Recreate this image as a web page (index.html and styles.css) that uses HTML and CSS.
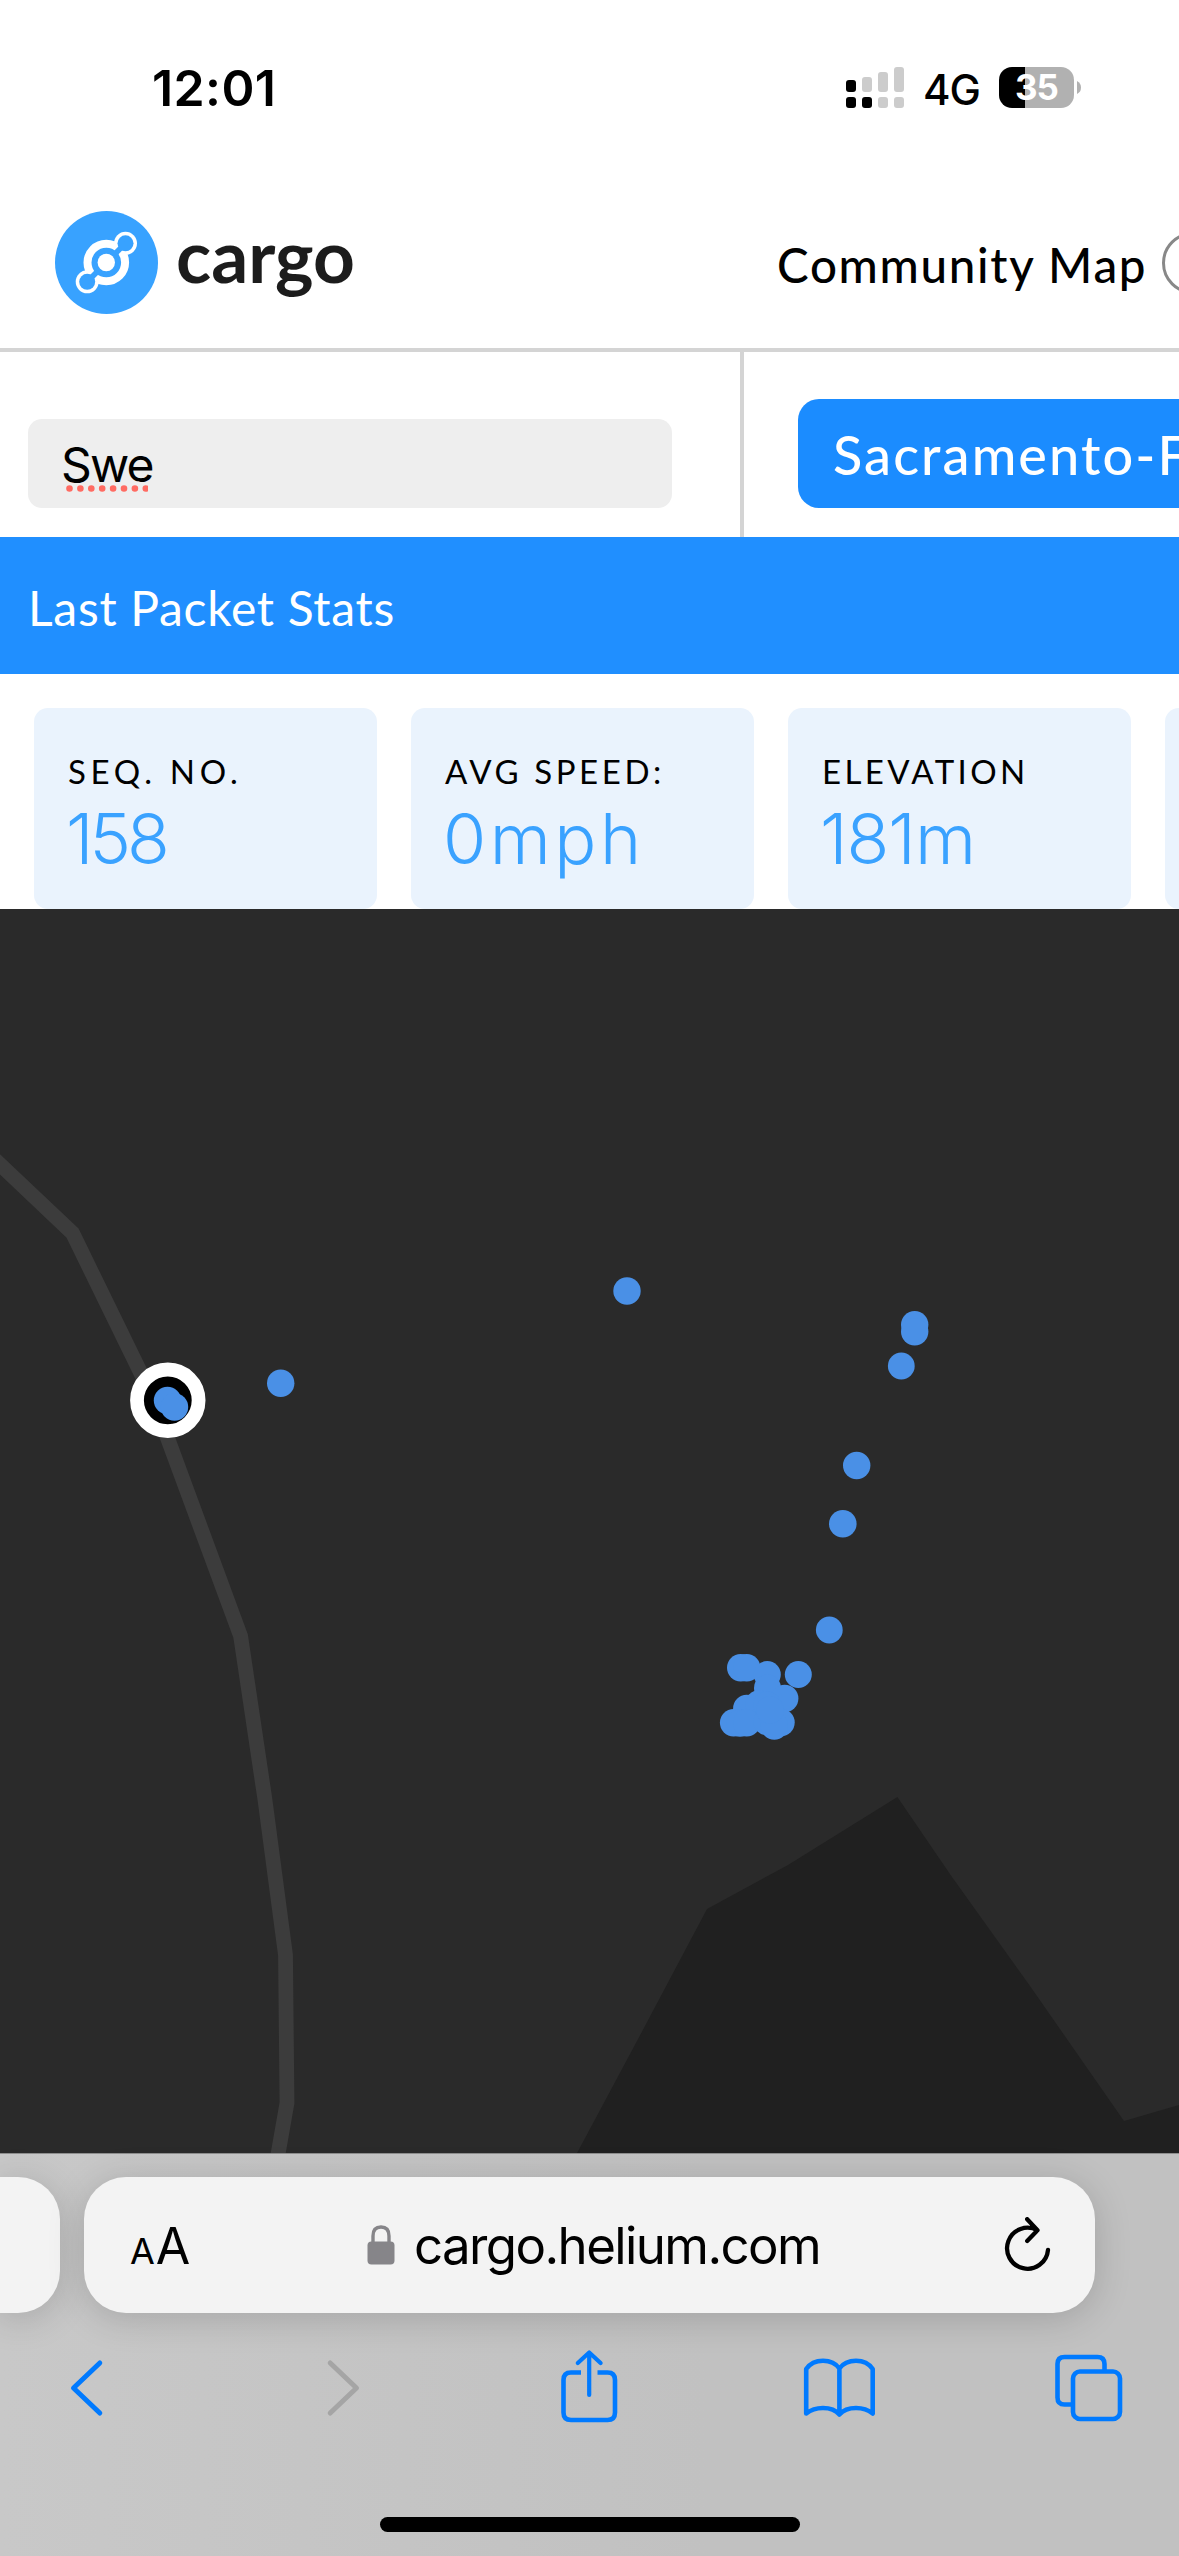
FILE: index.html
```html
<!DOCTYPE html>
<html lang="en">
<head>
<meta charset="utf-8">
<title>Helium Cargo</title>
<link rel="stylesheet" href="styles.css">
</head>
<body>
<div class="screen">
  <div class="status">
    <span class="clock">12:01</span>
    <div class="status-right">
      <svg class="signal" width="58" height="42" viewBox="0 0 58 42">
        <g fill="#ccc">
          <rect x="16" y="10" width="10" height="15" rx="3"/>
          <rect x="32" y="5" width="10" height="20" rx="3"/>
          <rect x="48" y="0" width="10" height="25" rx="3"/>
          <rect x="32" y="30" width="10" height="11" rx="3"/>
          <rect x="48" y="30" width="10" height="11" rx="3"/>
        </g>
        <rect x="0" y="13" width="10" height="12" rx="3"/>
        <rect x="0" y="30" width="10" height="11" rx="3"/>
        <rect x="16" y="30" width="10" height="11" rx="3"/>
      </svg>
      <span class="network">4G</span>
      <div class="battery"><span class="level">35</span></div>
      <svg class="nub" width="4" height="13" viewBox="0 0 4 13"><path d="M0 0Q4 2 4 6.500T0 13Z" fill="#b1b1b1"/></svg>
    </div>
  </div>

  <header class="header">
    <svg class="logo" width="103" height="103" viewBox="0 0 103 103">
      <circle cx="51.500" cy="51.500" r="51.500" fill="#38a2ff"/>
      <circle cx="51.300" cy="51.500" r="18.800" fill="none" stroke="#fff" stroke-width="8"/>
      <circle cx="70.500" cy="32.300" r="11.500" fill="#fff"/>
      <circle cx="32.200" cy="70.800" r="11.500" fill="#fff"/>
      <circle cx="70.500" cy="32.300" r="8" fill="#38a2ff"/>
      <circle cx="32.200" cy="70.800" r="8" fill="#38a2ff"/>
      <path d="M70.500 32.300L32.200 70.800" stroke="#38a2ff" stroke-width="5.500"/>
      <circle cx="51.300" cy="51.500" r="8.700" fill="#fff"/>
    </svg>
    <span class="brand">cargo</span>
    <span class="nav-link">Community Map</span>
    <span class="nav-icon"></span>
  </header>

  <div class="toolbar">
    <div class="search-cell">
      <div class="search"><span class="query">Swe<svg class="spell" width="82" height="7" viewBox="0 0 82 7"><path d="M3.500 3.500H80.200" stroke="#ff6b62" stroke-width="6.600" stroke-linecap="round" stroke-dasharray="0 10.900"/></svg></span></div>
    </div>
    <div class="device-cell"><div class="device">Sacramento-F</div></div>
  </div>

  <div class="section-title"><span>Last Packet Stats</span></div>

  <div class="stats">
    <div class="card seq"><span class="label">SEQ. NO.</span><span class="value">158</span></div>
    <div class="card speed"><span class="label">AVG SPEED:</span><span class="value">0mph</span></div>
    <div class="card elev"><span class="label">ELEVATION</span><span class="value">181m</span></div>
    <div class="card"></div>
  </div>

  <svg class="map" width="1179" height="1244" viewBox="0 909 1179 1244">
    <rect y="909" width="1179" height="1246" fill="#2a2a2a"/>
    <path d="M576 2155L637 2041L707 1909L788 1865L897.400 1797L952 1877L1030 1986L1124 2121L1179 2105V2155Z" fill="#202020"/>
    <path d="M-20 1145.500L72.500 1233L152 1396L240.600 1636L265 1800L285.500 1955L287 2103L277 2160" fill="none" stroke="#3c3c3c" stroke-width="14.800"/>
    <circle cx="167.800" cy="1400.300" r="30.800" fill="#000" stroke="#fff" stroke-width="13.800"/>
    <g fill="#4a90e6">
      <circle cx="167.500" cy="1400.500" r="13.700"/><circle cx="174.500" cy="1407" r="13.700"/>
      <circle cx="280.700" cy="1383.300" r="13.700"/><circle cx="627" cy="1291" r="13.700"/>
      <circle cx="914.700" cy="1324.700" r="13.700"/><circle cx="914.700" cy="1331.700" r="13.700"/>
      <circle cx="901.300" cy="1366" r="13.400"/><circle cx="856.700" cy="1465.500" r="13.700"/>
      <circle cx="842.800" cy="1523.700" r="13.800"/><circle cx="829.300" cy="1630" r="13.400"/>
      <circle cx="798.300" cy="1674.500" r="13.500"/><circle cx="740.700" cy="1667.700" r="13.700"/>
      <circle cx="746.700" cy="1667.700" r="13.700"/><circle cx="767.300" cy="1674.500" r="13.500"/>
      <circle cx="767.500" cy="1688" r="13.500"/><circle cx="784.700" cy="1698.500" r="13.700"/>
      <circle cx="746.700" cy="1708.300" r="13.600"/><circle cx="759" cy="1704" r="13.700"/>
      <circle cx="767" cy="1705" r="13.700"/><circle cx="733.600" cy="1722.700" r="13.700"/>
      <circle cx="740" cy="1723" r="13.700"/><circle cx="746.700" cy="1722.700" r="13.700"/>
      <circle cx="767" cy="1721.500" r="13.700"/><circle cx="781" cy="1722.500" r="13.700"/>
      <circle cx="774.300" cy="1726" r="13.700"/><circle cx="770" cy="1710" r="13.700"/>
    </g>
  </svg>

  <div class="browser">
    <div class="tabs">
      <div class="pill previous"></div>
      <div class="pill address">
        <span class="text-size"><small>A</small><b>A</b></span>
        <svg class="lock" width="28" height="40" viewBox="0 0 28 40"><path d="M6 18V11Q6 2 14 2T22 11V18" fill="none" stroke="#868589" stroke-width="3.400"/><rect x="0.500" y="16.500" width="27" height="23" rx="4" fill="#868589"/></svg>
        <span class="url">cargo.helium.com</span>
        <svg class="reload" width="48" height="56" viewBox="0 0 48 56" fill="none" stroke="#000" stroke-width="4.300" stroke-linecap="round" stroke-linejoin="round"><path d="M45 33A20.500 20.500 0 1 1 34.500 13.300M24.200 2.200L34.500 13.300L24.200 24"/></svg>
      </div>
    </div>
    <svg class="actions" width="1179" height="90" viewBox="0 2345 1179 90" fill="none" stroke="#007aff" stroke-width="4.600" stroke-linecap="round" stroke-linejoin="round">
      <path d="M99.800 2363L73.500 2388L99.800 2413" stroke-width="5"/>
      <path d="M330.200 2363L356.500 2388L330.200 2413" stroke="#a5a5a5" stroke-width="5"/>
      <path d="M581 2372.500H571Q563.500 2372.500 563.500 2380V2412.500Q563.500 2420 571 2420H607.500Q615 2420 615 2412.500V2380Q615 2372.500 607.500 2372.500H597.500" stroke-linecap="butt"/>
      <path d="M589.200 2395V2352.500M577.800 2363L589.200 2352.500L600.600 2363" stroke-width="4.200"/>
      <path d="M839.400 2369V2414M839.400 2368.500Q834 2360.800 823 2360.800Q812 2360.800 806.200 2369V2413.500Q813 2408 823 2408Q834 2408 839.400 2414.500Q845 2408 856 2408Q866 2408 872.700 2413.500V2369Q867 2360.800 856 2360.800Q845 2360.800 839.400 2368.500"/>
      <path d="M1072 2404.500H1064.500Q1057.500 2404.500 1057.500 2397.500V2364Q1057.500 2357 1064.500 2357H1097.500Q1104.500 2357 1104.500 2364V2371" stroke-linecap="butt"/>
      <rect x="1073" y="2371.500" width="47" height="47.500" rx="7"/>
    </svg>
    <div class="home-bar"></div>
  </div>
</div>
</body>
</html>
```
FILE: styles.css
```css
* { box-sizing: border-box; }
body { margin: 0; background: #fff; font-family: Lato, sans-serif; color: #000; }
svg { display: block; flex: none; }
span { white-space: nowrap; flex: none; }
.screen { width: 1179px; height: 2556px; overflow: hidden; display: flex; flex-direction: column; }
.screen > * { flex: none; }

.status { height: 175px; display: flex; align-items: center; justify-content: space-between; padding: 0 98px 0 152px; font-family: Inter, sans-serif; }
.clock { font-size: 50px; font-weight: 600; letter-spacing: 0.4px; }
.status-right { display: flex; align-items: center; }
.network { font-size: 42px; font-weight: 500; margin-left: 19px; width: 76px; letter-spacing: -1px; padding-top: 3px; }
.battery { width: 75px; height: 41px; border-radius: 13px; background: linear-gradient(90deg, #000 26px, #b1b1b1 26px); display: flex; align-items: center; justify-content: center; }
.level { color: #fff; font-size: 35px; font-weight: 700; line-height: 41px; letter-spacing: -1px; }
.nub { margin-left: 3px; }

.header { height: 177px; border-bottom: 4px solid #d4d4d4; display: flex; align-items: center; padding: 2px 0 0 55px; overflow: hidden; }
.brand { margin-left: 18px; width: 601px; font-size: 73px; line-height: 90px; font-weight: 700; color: #1c1c1c; padding-bottom: 15px; }
.nav-link { font-size: 47.500px; font-weight: 500; width: 385px; padding-top: 4px; letter-spacing: 1.700px; }
.nav-icon { width: 62px; height: 62px; border: 3px solid #888; border-radius: 50%; }

.toolbar { height: 185px; display: flex; }
.search-cell { flex: none; width: 744px; border-right: 4px solid #d4d4d4; padding: 67px 68px 0 28px; }
.search { height: 89px; border-radius: 14px; background: #eee; padding-left: 33px; font: 48px/91px Inter, sans-serif; }
.query { position: relative; letter-spacing: -1.800px; }
.spell { position: absolute; left: 5px; top: 50px; }
.device-cell { flex: none; width: 435px; overflow: hidden; padding: 46.500px 0 0 54px; }
.device { width: 470px; height: 109.500px; border-radius: 21px; background: #1b8cff; color: #fff; padding-left: 35px; font-size: 54px; font-weight: 500; line-height: 112px; white-space: nowrap; letter-spacing: 2.100px; }

.section-title { height: 136.500px; background: #208fff; color: #fff; padding-left: 28px; font-size: 48px; line-height: 142px; letter-spacing: 0.700px; }

.stats { height: 235.500px; padding: 34.500px 0 0 34px; display: flex; gap: 34px; }
.card { flex: none; width: 343px; height: 201px; border-radius: 14px; background: #eaf3fd; padding: 43px 0 0 34px; display: flex; flex-direction: column; }
.label { font-size: 33px; line-height: 40px; }
.value { font-family: Inter, sans-serif; font-weight: 300; font-size: 70px; line-height: 84px; color: #3aa2ff; margin: 6px 0 0 -2px; }
.seq .label { letter-spacing: 4.700px; }
.seq .value { letter-spacing: -4px; }
.speed .label { letter-spacing: 3.600px; }
.speed .value { letter-spacing: 3.500px; }
.elev .label { letter-spacing: 3.400px; }
.elev .value { letter-spacing: -1px; }

.browser { flex: 1 0 0; background: linear-gradient(90deg, #c8c8c8, #c1c1c1 60%); border-top: 1px solid #8e8e8e; padding-top: 23px; display: flex; flex-direction: column; align-items: center; }
.tabs { align-self: stretch; display: flex; gap: 24px; }
.pill { height: 136px; background: #f3f3f3; box-shadow: 0 5px 36px rgba(0,0,0,.17); }
.previous { width: 60px; border-radius: 0 42px 42px 0; }
.address { width: 1011px; border-radius: 42px; display: flex; align-items: center; padding-left: 46px; font-family: Inter, sans-serif; }
.text-size { width: 237px; line-height: 60px; padding-top: 14px; }
.text-size small { font-size: 36px; letter-spacing: 1px; }
.text-size b { font-size: 50px; font-weight: 400; }
.url { font-size: 51px; width: 589px; margin-left: 19px; letter-spacing: -1.600px; }
.actions { margin-top: 32px; }
.home-bar { width: 420px; height: 15px; border-radius: 8px; background: #000; margin-top: 82px; }
```
